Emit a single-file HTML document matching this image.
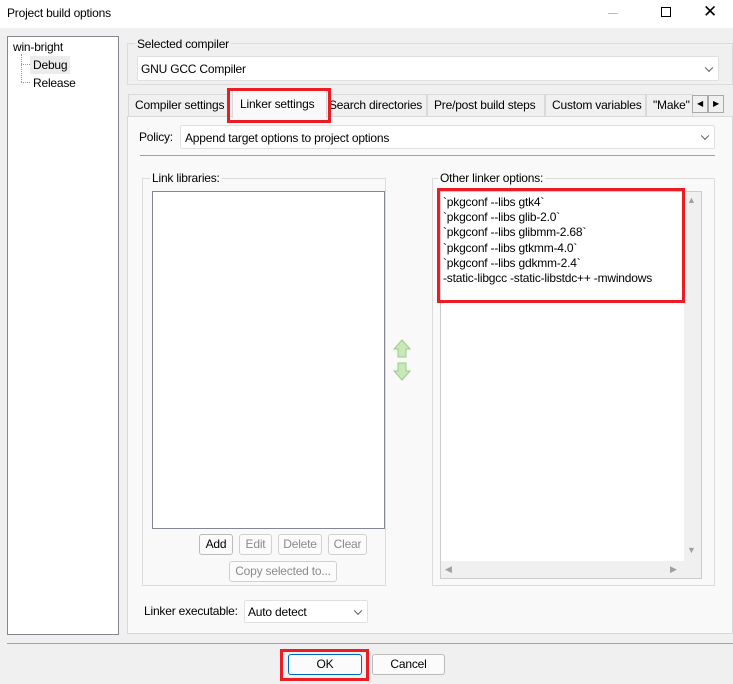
<!DOCTYPE html><html><head><style>
*{box-sizing:border-box;margin:0;padding:0}
body{width:733px;height:684px;background:#f0f0f0;font:12px "Liberation Sans",sans-serif;letter-spacing:-0.2px;color:#000;position:relative;overflow:hidden}
.a{position:absolute}
.t{position:absolute;white-space:nowrap}
.btn{position:absolute;border:1px solid #d0d0d0;border-radius:3px;background:#fbfbfb;color:#8a8a8a;text-align:center;line-height:19px}
.combo{position:absolute;background:#fff;border:1px solid #e0e0e0;border-radius:2px}
.chev{position:absolute;right:6px;top:50%;width:6px;height:6px;border-right:1px solid #555;border-bottom:1px solid #555;transform:translateY(-70%) rotate(45deg)}
.grp{position:absolute;border:1px solid #dcdcdc}
.red{position:absolute;border:3px solid #ec1c24}
.tab{position:absolute;top:94px;height:23px;border:1px solid #d9d9d9;background:#f0f0f0;line-height:21px;padding-left:6px;overflow:hidden}
</style></head><body>
<div class="a" style="left:0;top:0;width:733px;height:28px;background:#fff"></div>
<div class="t" style="left:7px;top:6px">Project build options</div>
<div class="a" style="left:608px;top:13px;width:10px;height:1px;background:#bbb"></div>
<div class="a" style="left:661px;top:7px;width:10px;height:10px;border:1px solid #000"></div>
<div class="t" style="left:703px;top:2px;font-size:17px">✕</div>

<div class="a" style="left:7px;top:36px;width:112px;height:599px;background:#fff;border:1px solid #828790"></div>
<div class="t" style="left:13px;top:40px">win-bright</div>
<div class="a" style="left:21px;top:54px;height:28px;border-left:1px dotted #999"></div>
<div class="a" style="left:21px;top:64px;width:9px;border-top:1px dotted #999"></div>
<div class="a" style="left:21px;top:82px;width:9px;border-top:1px dotted #999"></div>
<div class="a" style="left:30px;top:56px;width:40px;height:18px;background:#ececec"></div>
<div class="t" style="left:33px;top:58px">Debug</div>
<div class="t" style="left:33px;top:76px">Release</div>

<div class="grp" style="left:127px;top:43px;width:606px;height:42px"></div>
<div class="t" style="left:135px;top:37px;background:#f0f0f0;padding:0 2px">Selected compiler</div>
<div class="combo" style="left:137px;top:56px;width:582px;height:25px"><span class="t" style="left:3px;top:5px">GNU GCC Compiler</span><span class="chev"></span></div>

<div class="a" style="left:127px;top:116px;width:606px;height:518px;background:#f9f9f9;border:1px solid #d9d9d9"></div>
<div class="tab" style="left:128px;width:102px">Compiler settings</div>
<div class="tab" style="left:328px;width:99px;padding-left:0">Search directories</div>
<div class="tab" style="left:427px;width:118px">Pre/post build steps</div>
<div class="tab" style="left:545px;width:101px">Custom variables</div>
<div class="tab" style="left:646px;width:47px">"Make"</div>
<div class="a" style="left:692px;top:95px;width:16px;height:18px;border:1px solid #aaa;background:#f0f0f0;font-size:8px;text-align:center;line-height:16px">◀</div>
<div class="a" style="left:708px;top:95px;width:16px;height:18px;border:1px solid #aaa;background:#f0f0f0;font-size:8px;text-align:center;line-height:16px">▶</div>
<div class="a" style="left:232px;top:90px;width:95px;height:28px;background:#f9f9f9;border:1px solid #d9d9d9;border-bottom:none"></div>
<div class="t" style="left:240px;top:97px">Linker settings</div>
<div class="red" style="left:227px;top:88px;width:104px;height:35px"></div>

<div class="t" style="left:139px;top:130px">Policy:</div>
<div class="combo" style="left:180px;top:125px;width:535px;height:24px"><span class="t" style="left:4px;top:5px">Append target options to project options</span><span class="chev"></span></div>
<div class="a" style="left:140px;top:155px;width:575px;height:1px;background:#a0a0a0"></div>

<div class="grp" style="left:142px;top:178px;width:244px;height:408px"></div>
<div class="t" style="left:150px;top:171px;background:#f9f9f9;padding:0 2px">Link libraries:</div>
<div class="a" style="left:152px;top:191px;width:233px;height:338px;background:#fff;border:1px solid #828790"></div>
<svg class="a" style="left:392px;top:339px" width="20" height="42"><path d="M10 1L18 10H14V18H6V10H2Z" fill="#c9e8b8" stroke="#9ccc88"/><path d="M10 41L18 32H14V24H6V32H2Z" fill="#c9e8b8" stroke="#9ccc88"/></svg>
<div class="btn" style="left:199px;top:534px;width:34px;height:21px;color:#000;border-color:#bbb">Add</div>
<div class="btn" style="left:239px;top:534px;width:33px;height:21px">Edit</div>
<div class="btn" style="left:278px;top:534px;width:44px;height:21px">Delete</div>
<div class="btn" style="left:328px;top:534px;width:39px;height:21px">Clear</div>
<div class="btn" style="left:229px;top:561px;width:108px;height:21px">Copy selected to...</div>

<div class="grp" style="left:432px;top:178px;width:283px;height:408px"></div>
<div class="t" style="left:438px;top:171px;background:#f9f9f9;padding:0 2px">Other linker options:</div>
<div class="a" style="left:440px;top:191px;width:262px;height:388px;background:#fff;border:1px solid #ccc"></div>
<div class="a" style="left:684px;top:192px;width:17px;height:369px;background:#f0f0f0"></div>
<div class="a" style="left:441px;top:561px;width:260px;height:17px;background:#f0f0f0"></div>
<div class="t" style="left:687px;top:195px;font-size:9px;color:#a0a0a0">▲</div>
<div class="t" style="left:687px;top:545px;font-size:9px;color:#a0a0a0">▼</div>
<div class="t" style="left:445px;top:564px;font-size:9px;color:#a0a0a0">◀</div>
<div class="t" style="left:670px;top:564px;font-size:9px;color:#a0a0a0">▶</div>
<div class="t" style="left:443px;top:195px;line-height:15.2px">`pkgconf --libs gtk4`<br>`pkgconf --libs glib-2.0`<br>`pkgconf --libs glibmm-2.68`<br>`pkgconf --libs gtkmm-4.0`<br>`pkgconf --libs gdkmm-2.4`<br>-static-libgcc -static-libstdc++ -mwindows</div>
<div class="red" style="left:437px;top:188px;width:248px;height:115px"></div>

<div class="t" style="left:144px;top:604px">Linker executable:</div>
<div class="combo" style="left:244px;top:600px;width:124px;height:23px"><span class="t" style="left:3px;top:4px">Auto detect</span><span class="chev"></span></div>

<div class="a" style="left:7px;top:643px;width:726px;height:1px;background:#a0a0a0"></div>
<div class="btn" style="left:288px;top:654px;width:74px;height:21px;color:#000;border-color:#0067c0">OK</div>
<div class="btn" style="left:372px;top:654px;width:73px;height:21px;color:#000;border-color:#bbb">Cancel</div>
<div class="red" style="left:280px;top:649px;width:89px;height:32px"></div>
</body></html>
